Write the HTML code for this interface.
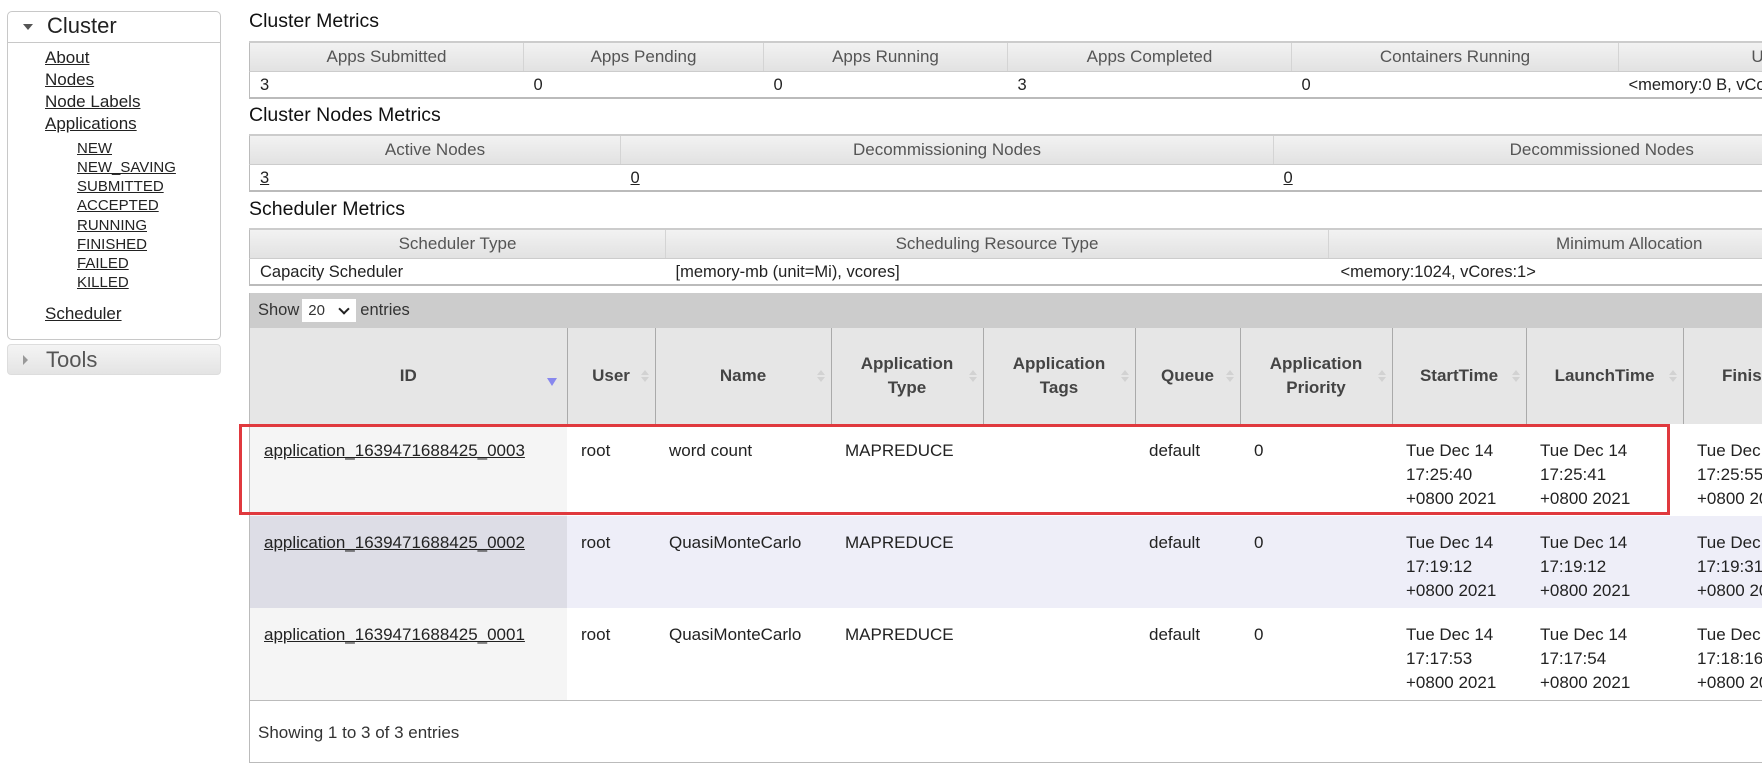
<!DOCTYPE html>
<html><head><meta charset="utf-8">
<style>
*{box-sizing:border-box;margin:0;padding:0}
html,body{width:1762px;height:772px;overflow:hidden}
body{background:#fff;font-family:"Liberation Sans","Noto Sans CJK SC",sans-serif;color:#222}
#pg{position:relative;width:1762px;height:772px;overflow:hidden}
a{color:#222;text-decoration:underline}
.abs{position:absolute}
.side{left:7px;top:11px;width:214px;height:329px;border:1px solid #c8c8c8;border-radius:5px}
.side .hd{height:31px;border-bottom:1px solid #c8c8c8;font-size:22px;line-height:28px;padding-left:39px;position:relative}
.side .hd:before{content:"";position:absolute;left:15px;top:12px;border-left:5px solid transparent;border-right:5px solid transparent;border-top:6px solid #555}
.lnk{position:absolute;left:37px;font-size:17px;line-height:20px}
.sub{position:absolute;left:69px;font-size:15px;line-height:18px}
.tools{left:7px;top:344px;width:214px;height:31px;border:1px solid #ddd;border-radius:4px;background:linear-gradient(#f4f4f4,#e4e4e4);font-size:22px;line-height:29px;padding-left:38px;color:#555}
.tools:before{content:"";position:absolute;left:15px;top:10px;border-top:5px solid transparent;border-bottom:5px solid transparent;border-left:5px solid #999}
.title{left:249px;font-size:19.5px;line-height:24px;color:#111}
.clip{position:absolute;left:249px;width:1513px;overflow:hidden}
table{border-collapse:collapse;table-layout:fixed}
.mt{border-bottom:2px solid #bbb}
.mt th{height:29px;font-weight:normal;font-size:17px;color:#555;background:linear-gradient(#f2f2f2,#e2e2e2);border-top:2px solid #ccc;border-left:1px solid #d4d4d4;border-bottom:1px solid #ccc;white-space:nowrap;overflow:hidden}
.mt th:first-child{border-left:1px solid #bbb}
.mt td{height:27px;font-size:16.5px;padding-left:10px;padding-top:2px;white-space:nowrap;overflow:hidden;vertical-align:middle}
.mt td:first-child{border-left:1px solid #bbb}
.wrap{left:249px;top:293px;width:1513px;height:470px;border-left:1px solid #bbb;border-bottom:1px solid #bbb;overflow:hidden}
.bar{height:35px;background:#ccc;font-size:16.5px;line-height:35px;padding-left:8px;color:#333;width:1600px}
.sel{display:inline-block;background:#fff;width:54px;height:23px;line-height:23px;vertical-align:middle;margin:0 4px 0 3px;padding-left:6px;position:relative;font-size:15px}
.sel:after{content:"";position:absolute;left:38px;top:6px;width:6px;height:6px;border-right:2px solid #222;border-bottom:2px solid #222;transform:rotate(45deg)}
.dt th{height:96px;background:#e6e6e6;font-size:17px;color:#444;border-left:1px solid #aaa;position:relative;line-height:24px}
.dt th:first-child{border-left:none}
.dt th .s{position:absolute;right:6px;top:42px;width:8px;height:12px;opacity:.25}
.dt th .s:before{content:"";position:absolute;top:0;left:0;border-left:4px solid transparent;border-right:4px solid transparent;border-bottom:5px solid #999}
.dt th .s:after{content:"";position:absolute;top:7px;left:0;border-left:4px solid transparent;border-right:4px solid transparent;border-top:5px solid #999}
.dt th .d{position:absolute;right:10px;top:50px;border-left:5px solid transparent;border-right:5px solid transparent;border-top:8px solid #8888ee}
.dt td{vertical-align:top;font-size:17px;line-height:24px;padding:15px 0 0 14px;white-space:nowrap;overflow:hidden;color:#222}
.r1 td,.r3 td{background:#fff;height:92px}
.r2 td{background:#eeeef8;height:92px}
.r1 td:first-child,.r3 td:first-child{background:#f5f5f5}
.r2 td:first-child{background:#dddde6}
.r3 td{border-bottom:1px solid #bbb}
.foot{position:absolute;left:8px;top:430px;font-size:17px;color:#333}
.red{left:239px;top:424px;width:1431px;height:91px;border:3px solid #e0393e}
</style></head><body><div id="pg">

<div class="abs side">
 <div class="hd">Cluster</div>
 <a class="lnk" style="top:36px">About</a>
 <a class="lnk" style="top:58px">Nodes</a>
 <a class="lnk" style="top:80px">Node Labels</a>
 <a class="lnk" style="top:102px">Applications</a>
 <a class="sub" style="top:128px">NEW</a>
 <a class="sub" style="top:147px">NEW_SAVING</a>
 <a class="sub" style="top:166px">SUBMITTED</a>
 <a class="sub" style="top:185px">ACCEPTED</a>
 <a class="sub" style="top:205px">RUNNING</a>
 <a class="sub" style="top:224px">FINISHED</a>
 <a class="sub" style="top:243px">FAILED</a>
 <a class="sub" style="top:262px">KILLED</a>
 <a class="lnk" style="top:292px">Scheduler</a>
</div>
<div class="abs tools">Tools</div>

<div class="abs title" style="top:9px">Cluster Metrics</div>
<div class="clip" style="top:41px">
<table class="mt" style="width:1760px">
<colgroup><col style="width:274px"><col style="width:240px"><col style="width:244px"><col style="width:284px"><col style="width:327px"><col style="width:391px"></colgroup>
<tr><th>Apps Submitted</th><th>Apps Pending</th><th>Apps Running</th><th>Apps Completed</th><th>Containers Running</th><th>Used Resources</th></tr>
<tr><td>3</td><td>0</td><td>0</td><td>3</td><td>0</td><td>&lt;memory:0 B, vCores:0&gt;</td></tr>
</table></div>

<div class="abs title" style="top:103px">Cluster Nodes Metrics</div>
<div class="clip" style="top:134px">
<table class="mt" style="width:1680px">
<colgroup><col style="width:371px"><col style="width:653px"><col style="width:656px"></colgroup>
<tr><th>Active Nodes</th><th>Decommissioning Nodes</th><th>Decommissioned Nodes</th></tr>
<tr><td><a>3</a></td><td><a>0</a></td><td><a>0</a></td></tr>
</table></div>

<div class="abs title" style="top:197px">Scheduler Metrics</div>
<div class="clip" style="top:228px">
<table class="mt" style="width:1680px">
<colgroup><col style="width:416px"><col style="width:663px"><col style="width:601px"></colgroup>
<tr><th>Scheduler Type</th><th>Scheduling Resource Type</th><th>Minimum Allocation</th></tr>
<tr><td>Capacity Scheduler</td><td>[memory-mb (unit=Mi), vcores]</td><td style="padding-left:12px">&lt;memory:1024, vCores:1&gt;</td></tr>
</table></div>

<div class="abs wrap">
 <div class="bar">Show<span class="sel">20</span>entries</div>
 <table class="dt" style="width:1600px">
 <colgroup><col style="width:317px"><col style="width:88px"><col style="width:176px"><col style="width:152px"><col style="width:152px"><col style="width:105px"><col style="width:152px"><col style="width:134px"><col style="width:157px"><col style="width:167px"></colgroup>
 <tr><th>ID<span class="d"></span></th><th>User<span class="s"></span></th><th>Name<span class="s"></span></th><th>Application<br>Type<span class="s"></span></th><th>Application<br>Tags<span class="s"></span></th><th>Queue<span class="s"></span></th><th>Application<br>Priority<span class="s"></span></th><th>StartTime<span class="s"></span></th><th>LaunchTime<span class="s"></span></th><th>FinishTime</th></tr>
 <tr class="r1"><td><a>application_1639471688425_0003</a></td><td>root</td><td>word count</td><td>MAPREDUCE</td><td></td><td>default</td><td>0</td><td>Tue Dec 14<br>17:25:40<br>+0800 2021</td><td>Tue Dec 14<br>17:25:41<br>+0800 2021</td><td>Tue Dec 14<br>17:25:55<br>+0800 2021</td></tr>
 <tr class="r2"><td><a>application_1639471688425_0002</a></td><td>root</td><td>QuasiMonteCarlo</td><td>MAPREDUCE</td><td></td><td>default</td><td>0</td><td>Tue Dec 14<br>17:19:12<br>+0800 2021</td><td>Tue Dec 14<br>17:19:12<br>+0800 2021</td><td>Tue Dec 14<br>17:19:31<br>+0800 2021</td></tr>
 <tr class="r3"><td><a>application_1639471688425_0001</a></td><td>root</td><td>QuasiMonteCarlo</td><td>MAPREDUCE</td><td></td><td>default</td><td>0</td><td>Tue Dec 14<br>17:17:53<br>+0800 2021</td><td>Tue Dec 14<br>17:17:54<br>+0800 2021</td><td>Tue Dec 14<br>17:18:16<br>+0800 2021</td></tr>
 </table>
 <div class="foot">Showing 1 to 3 of 3 entries</div>
</div>
<div class="abs red"></div>
</div></body></html>
